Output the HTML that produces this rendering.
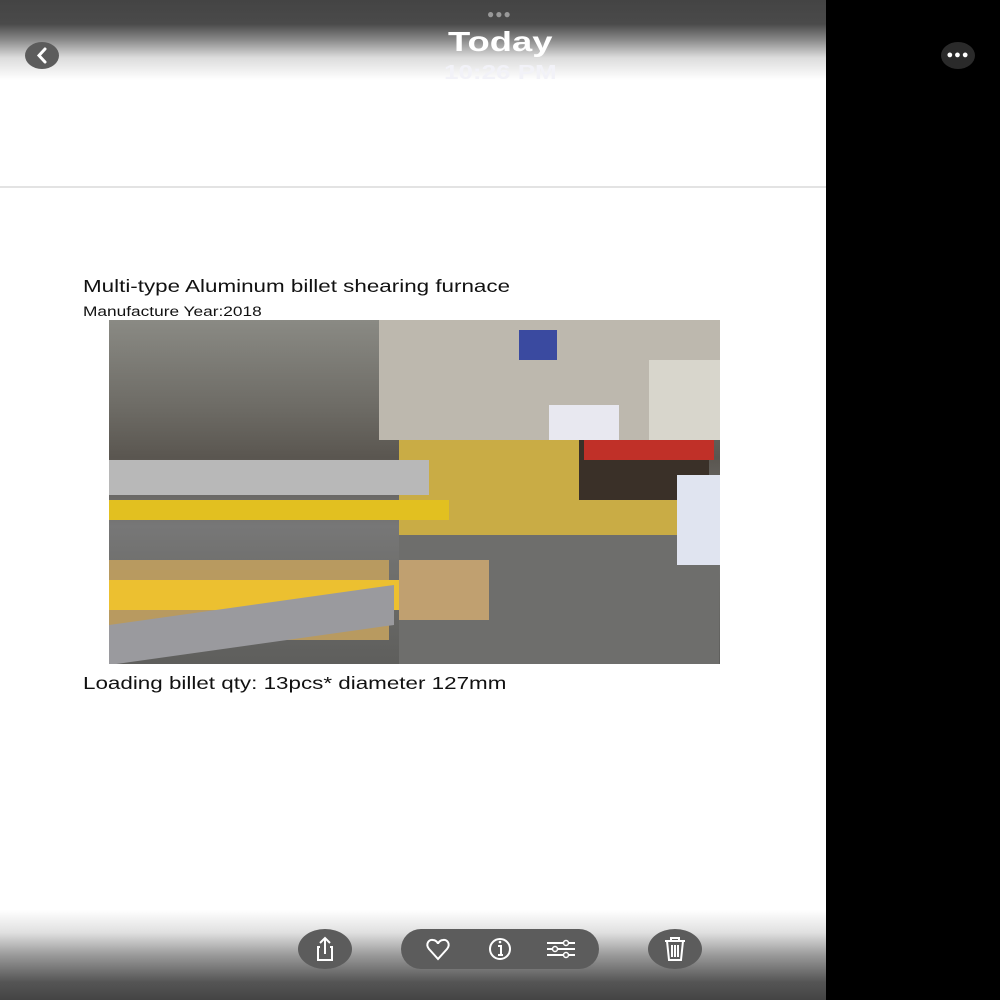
<!DOCTYPE html>
<html><head><style>
body{margin:0;width:1000px;height:1000px;background:#000;position:relative;overflow:hidden;font-family:"Liberation Sans",sans-serif}
#p{position:absolute;left:0;top:0;width:826px;height:1000px;background:#fff;overflow:hidden}
.top{position:absolute;left:0;top:0;width:826px;height:80px;background:linear-gradient(#444 0,#4a4a4a 30%,#8a8a8a 50%,#dcdcdc 72%,#fff 100%)}
.bot{position:absolute;left:0;top:910px;width:826px;height:90px;background:linear-gradient(#fff 0,#e0e0e0 25%,#9a9a9a 50%,#555 80%,#444 100%)}
.t{position:absolute;color:#111;transform:scaleX(1.28);transform-origin:0 0;white-space:nowrap}
.btn{position:absolute;background:#5c5c5c;border-radius:30px}
</style></head><body>
<div id="p">
<div class="top"></div>
<div style="position:absolute;left:487px;top:7px;color:#999;font-size:12px;letter-spacing:1px">●●●</div>
<div style="position:absolute;left:0;width:1000px;top:26px;text-align:center;color:#fff;font-weight:bold;font-size:28px"><span style="display:inline-block;transform:scaleX(1.3)">Today</span></div>
<div style="position:absolute;left:0;width:1000px;top:62px;text-align:center;color:#f2f2f8;font-weight:bold;font-size:20px"><span style="display:inline-block;transform:scaleX(1.3)">10:26 PM</span></div>
<div class="btn" style="left:25px;top:42px;width:34px;height:27px;border-radius:50%"><svg width="34" height="27"><path d="M20 7 L14 13.5 L20 20" stroke="#fff" stroke-width="3" fill="none" stroke-linecap="round"/></svg></div>
<div style="position:absolute;left:0;top:186px;width:826px;height:2px;background:#e3e3e3"></div>
<div class="t" style="left:83px;top:276px;font-size:17.5px">Multi-type Aluminum billet shearing furnace</div>
<div class="t" style="left:83px;top:304px;font-size:13.5px">Manufacture Year:2018</div>
<div style="position:absolute;left:109px;top:320px;width:611px;height:344px;overflow:hidden;background:linear-gradient(#8a8a84 0,#6e6c66 25%,#5a5650 40%,#777 60%,#6b6b68 80%,#5e5e5c 100%)">
 <div style="position:absolute;left:270px;top:0;width:341px;height:120px;background:#bdb8ae"></div>
 <div style="position:absolute;left:410px;top:10px;width:38px;height:30px;background:#3a4aa0"></div>
 <div style="position:absolute;left:540px;top:40px;width:71px;height:80px;background:#d8d6cc"></div>
 <div style="position:absolute;left:290px;top:120px;width:310px;height:95px;background:#c9ac45"></div>
 <div style="position:absolute;left:440px;top:85px;width:70px;height:35px;background:#e8e8f0"></div>
 <div style="position:absolute;left:470px;top:120px;width:130px;height:60px;background:#3a3028"></div>
 <div style="position:absolute;left:475px;top:120px;width:130px;height:20px;background:#c03028"></div>
 <div style="position:absolute;left:0;top:140px;width:320px;height:35px;background:#b8b8b8"></div>
 <div style="position:absolute;left:0;top:180px;width:340px;height:20px;background:#e2c020"></div>
 <div style="position:absolute;left:290px;top:215px;width:320px;height:129px;background:#6e6e6c"></div>
 <div style="position:absolute;left:0;top:240px;width:280px;height:80px;background:#b89a60"></div>
 <div style="position:absolute;left:0;top:260px;width:290px;height:30px;background:#ecc030"></div>
 <div style="position:absolute;left:0;top:285px;width:285px;height:40px;background:#9a9a9e;transform:skewY(-8deg)"></div>
 <div style="position:absolute;left:290px;top:240px;width:90px;height:60px;background:#c0a070"></div>
 <div style="position:absolute;left:568px;top:155px;width:43px;height:90px;background:#e0e4f0"></div>
</div>
<div class="t" style="left:83px;top:673px;font-size:17.5px">Loading billet qty: 13pcs* diameter 127mm</div>
<div class="bot"></div>
<div class="btn" style="left:298px;top:929px;width:54px;height:40px;border-radius:50%"><svg width="54" height="40"><path d="M22 18 H20 V31 H34 V18 H32 M27 25 V9 M22 14 L27 9 L32 14" stroke="#fff" stroke-width="2" fill="none"/></svg></div>
<div class="btn" style="left:401px;top:929px;width:198px;height:40px;border-radius:20px"><svg width="198" height="40">
<path d="M37 30 L28 20 C24 15 28 10 32 11 C35 11 37 14 37 15 C37 14 39 11 42 11 C46 10 50 15 46 20 Z" stroke="#fff" stroke-width="2" fill="none"/>
<circle cx="99" cy="20" r="10" stroke="#fff" stroke-width="2" fill="none"/><path d="M97 17 H100 V26 M97 26 H102" stroke="#fff" stroke-width="2" fill="none"/><circle cx="99" cy="13" r="1.3" fill="#fff"/>
<path d="M146 14 H174 M146 20 H174 M146 26 H174" stroke="#fff" stroke-width="2"/><circle cx="165" cy="14" r="2.5" fill="#5c5c5c" stroke="#fff" stroke-width="1.5"/><circle cx="154" cy="20" r="2.5" fill="#5c5c5c" stroke="#fff" stroke-width="1.5"/><circle cx="165" cy="26" r="2.5" fill="#5c5c5c" stroke="#fff" stroke-width="1.5"/>
</svg></div>
<div class="btn" style="left:648px;top:929px;width:54px;height:40px;border-radius:50%"><svg width="54" height="40"><path d="M17 12 H37 M23 12 V9 H31 V12 M19 12 L21 31 H33 L35 12 M24 16 V28 M27 16 V28 M30 16 V28" stroke="#fff" stroke-width="2" fill="none"/></svg></div>
</div>
<div style="position:absolute;left:941px;top:42px;width:34px;height:27px;border-radius:50%;background:#2a2a2a;color:#fff;text-align:center;font-size:11px;line-height:27px;letter-spacing:1px">●●●</div>
</body></html>
